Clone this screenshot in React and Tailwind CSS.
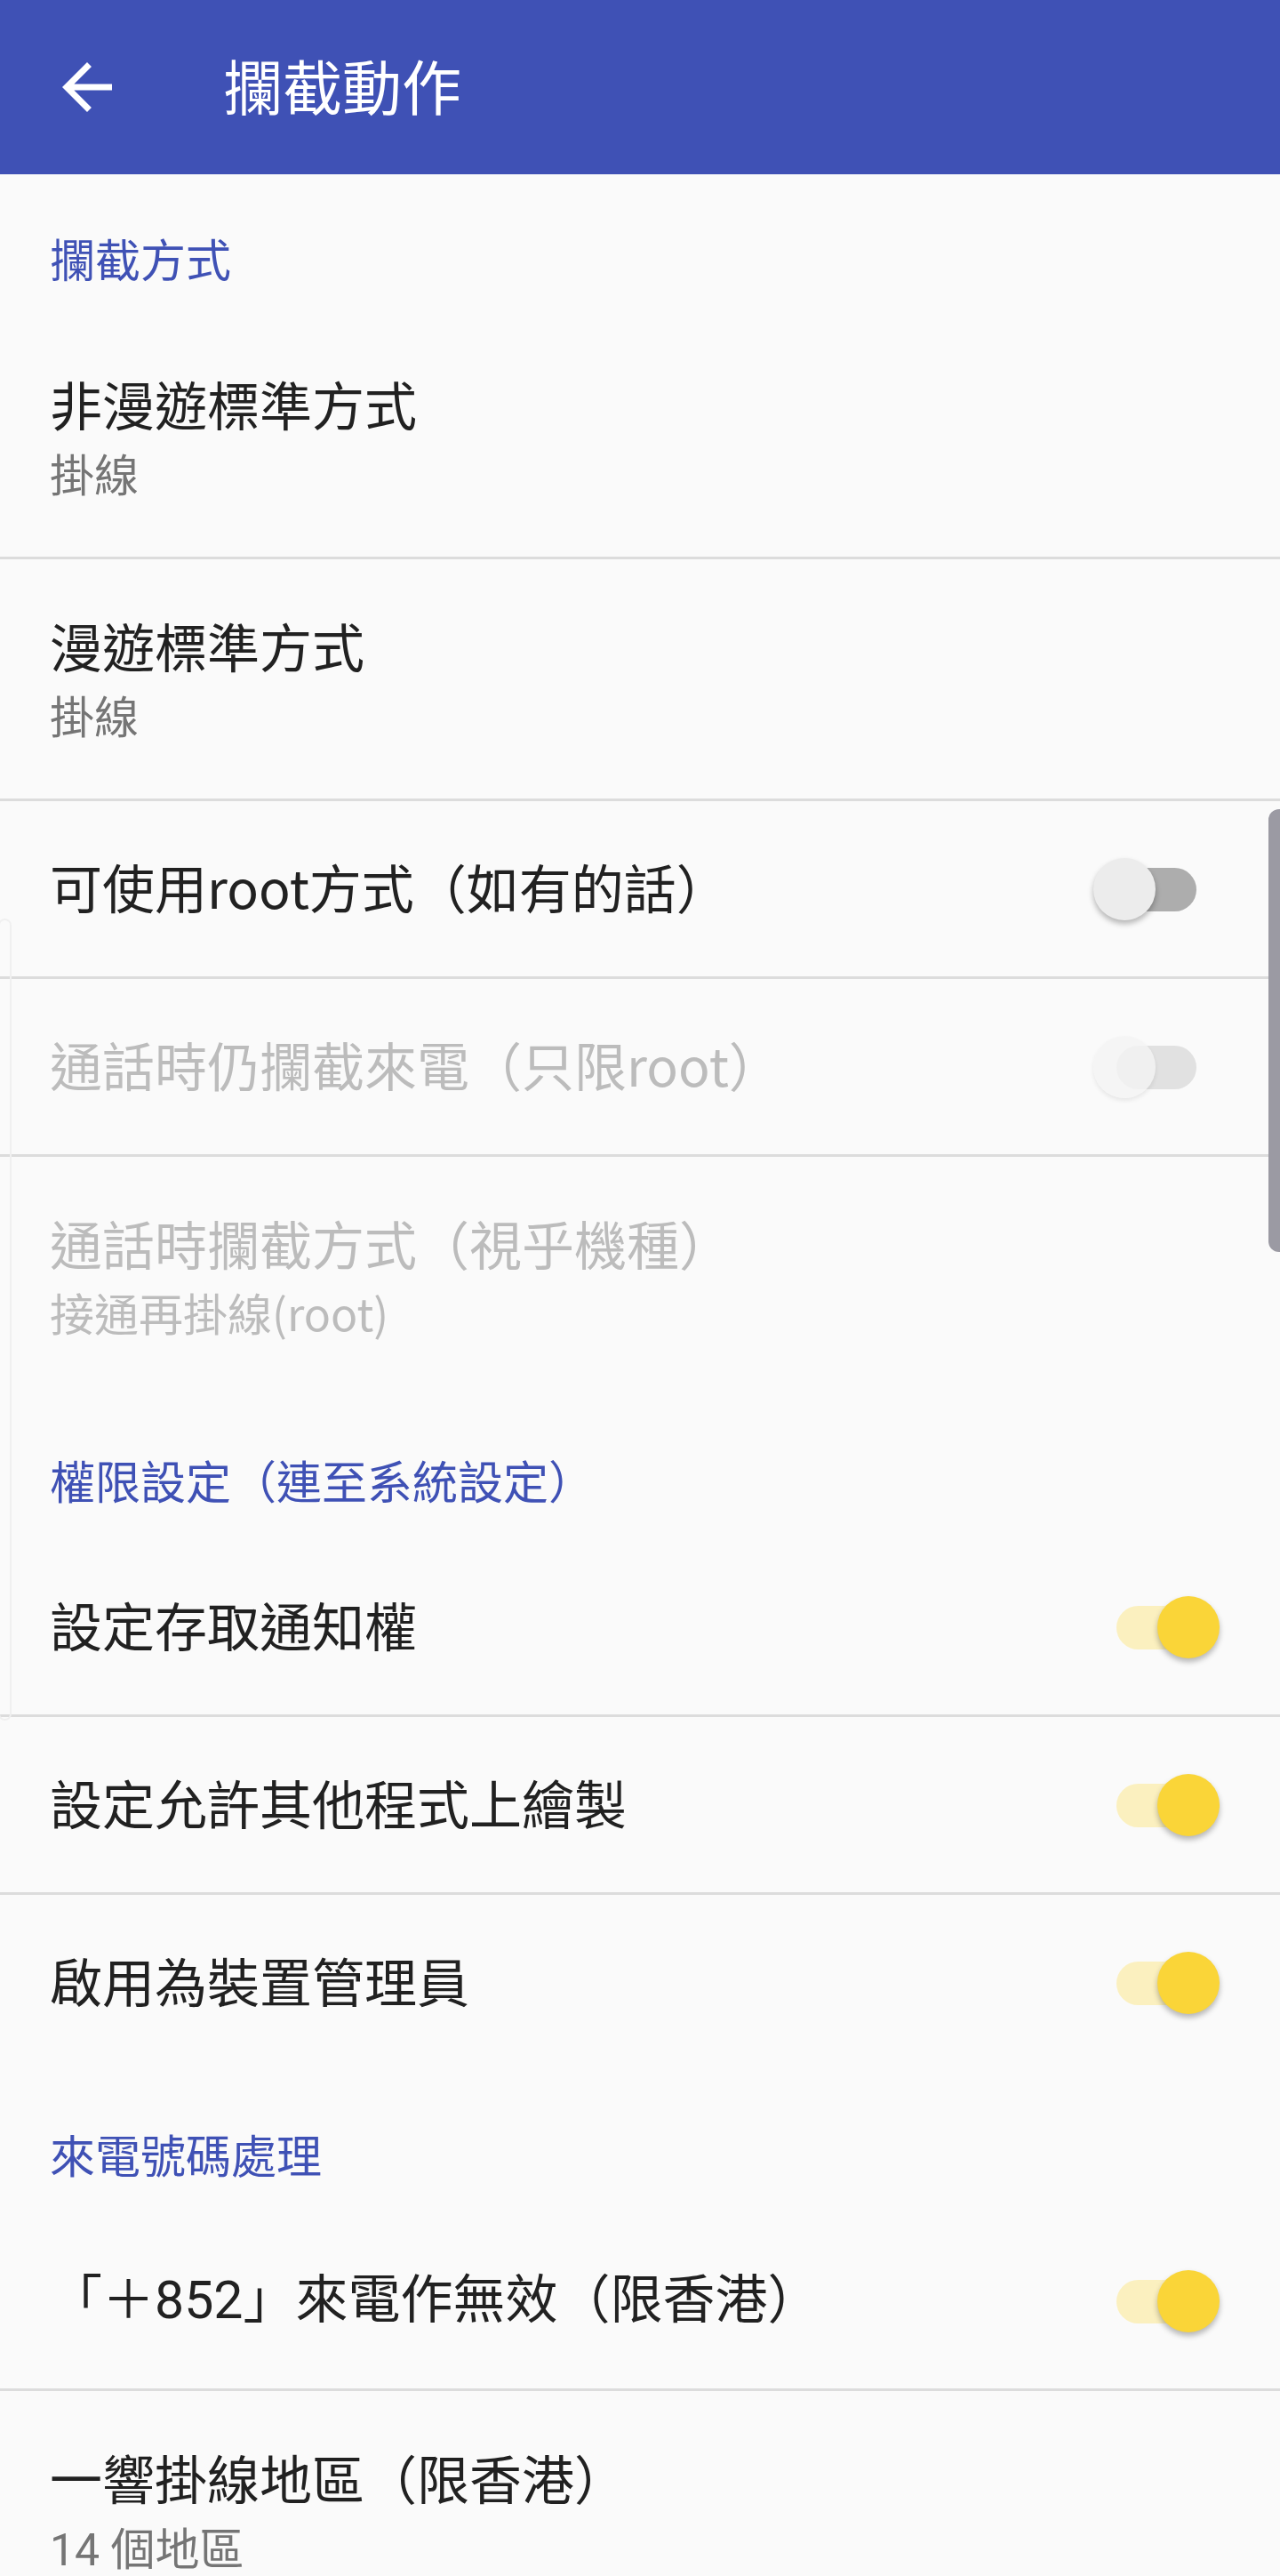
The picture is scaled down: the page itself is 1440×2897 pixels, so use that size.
import React from "react";

const Category = ({ title }) => (
  <div className="h-[161px] pl-[56px] pt-[64px]">
    <p className="text-[51px] leading-[60px] text-[#3f51b5]">{title}</p>
  </div>
);

const Divider = () => <div className="h-[3px] bg-[#dcdcdc]" />;

const Switch = ({ checked, disabled }) => {
  let trackColor = "bg-[#adadad]";
  let thumbColor = "bg-[#ececec] shadow-[0_4px_6px_rgba(0,0,0,0.28)]";
  if (checked) {
    trackColor = "bg-[#fbf0bf]";
    thumbColor = "bg-[#fad538] shadow-[0_4px_6px_rgba(0,0,0,0.28)]";
  }
  if (disabled) {
    trackColor = "bg-[#e1e1e1]";
    thumbColor = "bg-[#f4f4f4]/80 shadow-[0_3px_5px_rgba(0,0,0,0.08)]";
  }

  return (
    <div className="relative w-[142px] h-[70px] shrink-0">
      <div className={`absolute left-[26px] top-[11px] w-[90px] h-[49px] rounded-full ${trackColor}`} />
      <div
        className={`absolute top-0 w-[70px] h-[70px] rounded-full ${thumbColor} ${
          checked ? "right-0" : "left-0"
        }`}
      />
    </div>
  );
};

const Item = ({ title, summary, toggle, checked, disabled }) => {
  const titleColor = disabled ? "text-[#bcbcbc]" : "text-[#212121]";
  const summaryColor = disabled ? "text-[#bcbcbc]" : "text-[#757575]";

  if (summary) {
    return (
      <div className="h-[269px] pl-[56px] pt-[62px]">
        <p className={`text-[59px] leading-[70px] ${titleColor}`}>{title}</p>
        <p className={`mt-[12px] text-[50px] leading-[60px] ${summaryColor}`}>{summary}</p>
      </div>
    );
  }

  return (
    <div className="h-[197px] pl-[56px] pr-[68px] flex items-center justify-between">
      <p className={`mb-[6px] text-[59px] leading-[70px] ${titleColor}`}>{title}</p>
      {toggle && <Switch checked={checked} disabled={disabled} />}
    </div>
  );
};

export default function App() {
  return (
    <div className="relative w-[1440px] h-[2897px] overflow-hidden bg-[#fafafa] font-['Noto_Sans_CJK_TC','Noto_Sans',sans-serif]">
      {/* toolbar */}
      <header className="h-[196px] bg-[#3f51b5] flex items-center">
        <button className="ml-[56px] w-[84px] h-[84px] flex items-center justify-center">
          <svg width="84" height="84" viewBox="0 0 24 24" fill="#ffffff">
            <path d="M20 11H7.83l5.59-5.59L12 4l-8 8 8 8 1.41-1.41L7.83 13H20v-2z" />
          </svg>
        </button>
        <h1 className="ml-[111px] mb-[6px] text-[67px] leading-[80px] text-white">攔截動作</h1>
      </header>

      <Category title="攔截方式" />
      <Item title="非漫遊標準方式" summary="掛線" />
      <Divider />
      <Item title="漫遊標準方式" summary="掛線" />
      <Divider />
      <Item title="可使用root方式（如有的話）" toggle />
      <Divider />
      <Item title="通話時仍攔截來電（只限root）" toggle disabled />
      <Divider />
      <Item title="通話時攔截方式（視乎機種）" summary="接通再掛線(root)" disabled />

      <Category title="權限設定（連至系統設定）" />
      <Item title="設定存取通知權" toggle checked />
      <Divider />
      <Item title="設定允許其他程式上繪製" toggle checked />
      <Divider />
      <Item title="啟用為裝置管理員" toggle checked />

      <Category title="來電號碼處理" />
      <Item
        title={
          <>
            「＋<span className="font-['Roboto',sans-serif]">852</span>」來電作無效（限香港）
          </>
        }
        toggle
        checked
      />
      <Divider />
      <Item
        title="一響掛線地區（限香港）"
        summary={
          <>
            <span className="font-['Roboto',sans-serif]">14 </span>個地區
          </>
        }
      />

      {/* scroll indicator */}
      <div className="absolute right-0 top-[910px] w-[13px] h-[498px] rounded-l-[12px] bg-[#9b9aa3]" />
      {/* edge panel handle */}
      <div className="absolute left-[-2px] top-[1033px] w-[15px] h-[902px] rounded-[8px] border-2 border-[#f0f0f0]" />
    </div>
  );
}
